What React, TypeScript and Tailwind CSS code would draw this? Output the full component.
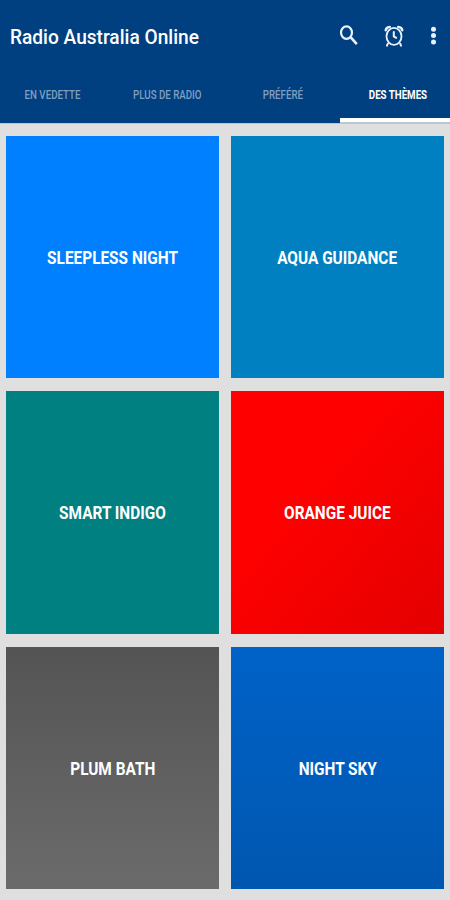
const tabs = [
  { label: 'EN VEDETTE', active: false },
  { label: 'PLUS DE RADIO', active: false },
  { label: 'PRÉFÉRÉ', active: false },
  { label: 'DES THÈMES', active: true }
];

const themes = [
  { name: 'SLEEPLESS NIGHT', background: 'bg-[#0080ff]' },
  { name: 'AQUA GUIDANCE', background: 'bg-[#0080c0]' },
  { name: 'SMART INDIGO', background: 'bg-[#008080]' },
  { name: 'ORANGE JUICE', background: 'bg-linear-to-br from-[#ff0000] from-35% to-[#e40000]' },
  { name: 'PLUM BATH', background: 'bg-linear-to-b from-[#545454] to-[#6b6b6b]' },
  { name: 'NIGHT SKY', background: 'bg-linear-to-b from-[#0062c8] to-[#0057b0]' }
];

const SearchIcon = () => (
  <svg viewBox="0 0 24 27" className="h-[27px] w-6" fill="none" stroke="currentColor">
    <ellipse cx="9.5" cy="10.6" rx="5.5" ry="6.2" strokeWidth="2.2" />
    <path d="M13.6 15.2L19.8 22.2" strokeWidth="2.6" />
  </svg>
);

const AlarmIcon = () => (
  <svg
    viewBox="0 0 20 22"
    className="h-[22px] w-5"
    fill="none"
    stroke="currentColor"
    strokeWidth="1.8"
    strokeLinecap="round"
  >
    <ellipse cx="10" cy="11.3" rx="7.5" ry="8.5" />
    <path d="M1.7 5.2C2 3.3 3.4 2.1 5.8 1.9M18.3 5.2C18 3.3 16.6 2.1 14.2 1.9" strokeWidth="2.4" />
    <path d="M3.8 18.7L3 20.7M16.2 18.7L17 20.7" strokeWidth="2" />
    <path d="M9.8 7V11.5L12.2 12.8" strokeWidth="2" />
  </svg>
);

const MoreIcon = () => (
  <svg viewBox="0 0 27 27" className="h-[27px] w-[27px]" fill="currentColor">
    <circle cx="13.5" cy="7.2" r="2.5" />
    <circle cx="13.5" cy="13.6" r="2.5" />
    <circle cx="13.5" cy="20" r="2.5" />
  </svg>
);

const Header = () => (
  <header className="h-[124px] overflow-hidden border-b border-[#b9c6d3] bg-[#004080] text-white">
    <div className="flex h-[72px] items-center justify-between pl-2.5">
      <h1 className="origin-left scale-x-[0.91] pt-[3px] text-[21px] font-medium whitespace-nowrap">
        Radio Australia Online
      </h1>
      <div className="flex shrink-0 items-center text-[#e9f1fb]">
        <button aria-label="Search" className="mr-[23px] -mt-px">
          <SearchIcon />
        </button>
        <button aria-label="Alarm" className="mr-4 -mt-px">
          <AlarmIcon />
        </button>
        <button aria-label="More" className="mr-[3px] -mt-px">
          <MoreIcon />
        </button>
      </div>
    </div>
    <nav className="-ml-[5px] flex w-[460px]">
      {tabs.map((tab) => (
        <button
          key={tab.label}
          className={`flex h-[50px] w-[115px] shrink-0 items-center justify-center border-b-4 pb-px text-[12px] whitespace-nowrap ${
            tab.active
              ? 'border-white font-bold text-white shadow-[0_1px_0_#b9c6d3]'
              : 'border-transparent font-medium text-[#7f9fc0]'
          }`}
        >
          <span className="scale-x-[0.81]">{tab.label}</span>
        </button>
      ))}
    </nav>
  </header>
);

export default function App() {
  return (
    <div className="h-[900px] w-[450px] overflow-hidden bg-[#dfdfdf] font-['Roboto',sans-serif]">
      <Header />
      <main className="grid grid-cols-2 gap-x-3 gap-y-[13px] px-1.5 pt-3">
        {themes.map((theme) => (
          <button
            key={theme.name}
            className={`flex h-[242.4px] items-center justify-center pt-[0.6px] text-[18px] font-bold text-white ${theme.background}`}
          >
            <span className="scale-x-[0.855] whitespace-nowrap">{theme.name}</span>
          </button>
        ))}
      </main>
    </div>
  );
}
